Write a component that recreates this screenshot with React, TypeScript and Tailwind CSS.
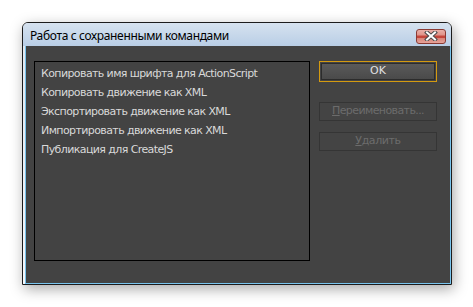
const commands = [
  'Копировать имя шрифта для ActionScript',
  'Копировать движение как XML',
  'Экспортировать движение как XML',
  'Импортировать движение как XML',
  'Публикация для CreateJS',
]

function CloseButton() {
  return (
    <div className="w-[30px] h-[15px] rounded-[3px] border border-[#8a3a33] bg-[linear-gradient(to_bottom,#eab0a8_0%,#e09288_40%,#c4463b_45%,#c4463b_60%,#d9857a_65%,#e6a49a_100%)] flex items-center justify-center">
      <svg width="14" height="10" viewBox="0 0 14 10">
        <path d="M3 1.5 L11 8.5 M11 1.5 L3 8.5" stroke="#4a4a4a" strokeWidth="4" strokeLinecap="square" />
        <path d="M3 1.5 L11 8.5 M11 1.5 L3 8.5" stroke="#ffffff" strokeWidth="2" strokeLinecap="square" />
      </svg>
    </div>
  )
}

export default function App() {
  return (
    <div className="w-[473px] h-[307px] bg-white pt-[22px] pl-[22px]">
      <div className="w-[430px] h-[263px] border border-[#1c1c1c] rounded-t-[6px] bg-[linear-gradient(to_bottom,#dfe7f0,#f4f7fb)] shadow-[2px_4px_14px_rgba(0,0,0,0.35)] flex flex-col pl-[2px] pr-0 pb-0">
        {/* Title bar */}
        <div className="h-[23px] -ml-[2px] pl-[7px] pr-[5px] rounded-t-[5px] bg-[linear-gradient(to_bottom,#d6e2ef,#b9cee6)] flex items-center justify-between">
          <span className="mt-[3px] text-[12px] text-black leading-none tracking-[-0.35px]" style={{ fontFamily: '"Noto Sans", "Open Sans", sans-serif' }}>
            Работа с сохраненными командами
          </span>
          <div className="mt-[3px]">
            <CloseButton />
          </div>
        </div>

        {/* Client area */}
        <div
          className="flex-1 bg-[#434343] border-l border-r border-b border-[#78c4ee] flex pt-[15px] pl-[8px] gap-[9px]"
          style={{ fontFamily: '"DejaVu Sans", "Liberation Sans", sans-serif' }}
        >
          <div className="w-[276px] h-[200px] border border-black pt-[2px] pl-[6px]">
            {commands.map((c) => (
              <div key={c} className="h-[19px] leading-[19px] text-[11px] text-[#d9d9d9] tracking-[-0.6px]">
                {c}
              </div>
            ))}
          </div>

          <div className="w-[118px] flex flex-col">
            <div className="h-[21px] border border-[#d49a10] p-[1px]">
              <div className="h-full border border-[#2c2c2c] bg-[linear-gradient(to_bottom,#5a5a5a,#4a4a4a)] flex items-center justify-center text-[11px] text-[#e0e0e0]">
                OK
              </div>
            </div>
            <div className="mt-[20px] h-[19px] border border-[#353535] bg-[#444444] flex items-center justify-center text-[11px] text-[#6c6c6c] tracking-[-0.6px]">
              <span><span className="underline">П</span>ереименовать...</span>
            </div>
            <div className="mt-[11px] h-[19px] border border-[#353535] bg-[#444444] flex items-center justify-center text-[11px] text-[#6c6c6c] tracking-[-0.4px]">
              <span><span className="underline">У</span>далить</span>
            </div>
          </div>
        </div>
      </div>
    </div>
  )
}
